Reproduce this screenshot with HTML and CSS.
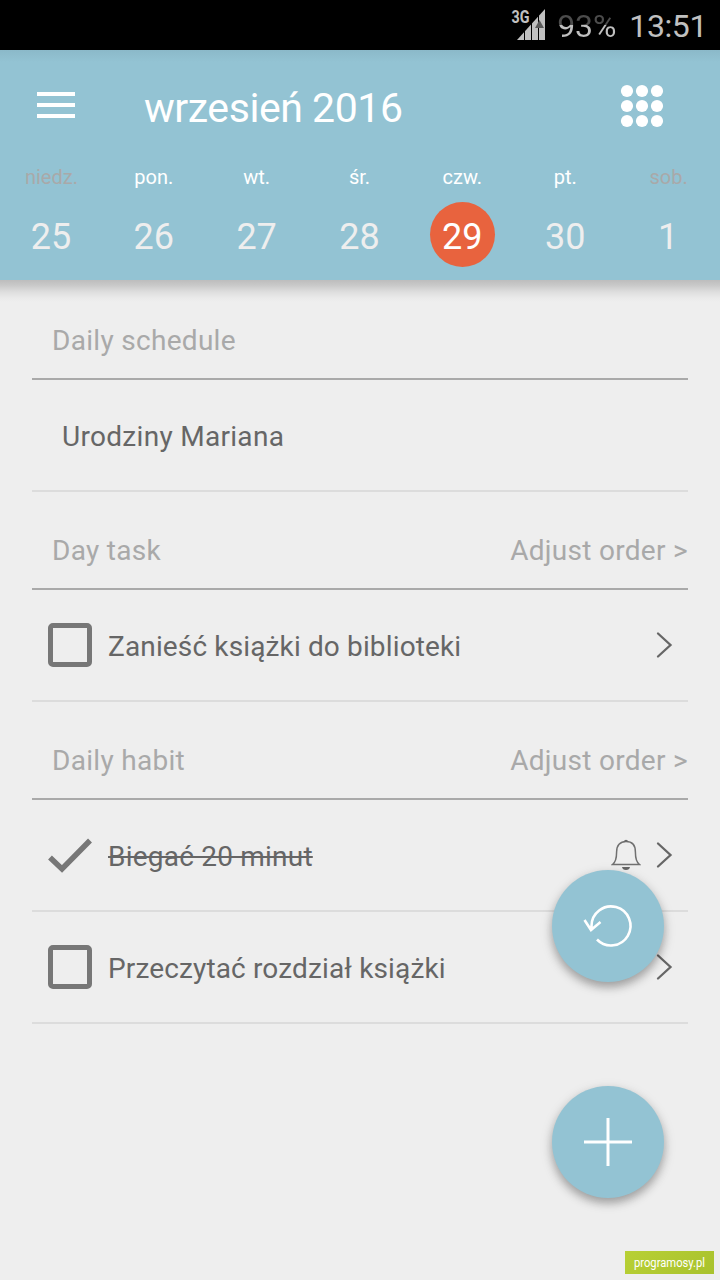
FILE: index.html
```html
<!DOCTYPE html>
<html lang="pl">
<head>
<meta charset="utf-8">
<title>wrzesień 2016</title>
<link rel="stylesheet" href="styles.css">
</head>
<body>
<div class="screen">
  <div class="statusbar">
    <svg class="signal" width="36" height="36" viewBox="0 0 36 36">
      <path d="M6 34L34 3V34Z" fill="#c0c0c0"/>
      <path d="M13.500 20V34M20.500 12V34M27.500 6V34" stroke="#000" stroke-width="1"/>
      <path d="M24 22L28.500 14L33 22Z" fill="#5a5a5a"/>
      <text class="network" x="0.500" y="17" textLength="18" lengthAdjust="spacingAndGlyphs">3G</text>
    </svg>
    <span class="battery">93%</span>
    <span class="clock">13:51</span>
  </div>

  <header class="header">
    <div class="toolbar">
      <svg class="menu" width="38" height="26" viewBox="0 0 38 26" fill="#fff">
        <path d="M0 0H38V4H0ZM0 11H38V15H0ZM0 22H38V26H0Z"/>
      </svg>
      <h1 class="title">wrzesień 2016</h1>
      <svg class="grid" width="44" height="44" viewBox="0 0 44 44" fill="#fff">
        <circle cx="7" cy="7" r="6.100"/><circle cx="22" cy="7" r="6.100"/><circle cx="37" cy="7" r="6.100"/>
        <circle cx="7" cy="22" r="6.100"/><circle cx="22" cy="22" r="6.100"/><circle cx="37" cy="22" r="6.100"/>
        <circle cx="7" cy="37" r="6.100"/><circle cx="22" cy="37" r="6.100"/><circle cx="37" cy="37" r="6.100"/>
      </svg>
    </div>
    <div class="week">
      <div class="day weekend"><span class="name">niedz.</span><span class="date">25</span></div>
      <div class="day"><span class="name">pon.</span><span class="date">26</span></div>
      <div class="day"><span class="name">wt.</span><span class="date">27</span></div>
      <div class="day"><span class="name">śr.</span><span class="date">28</span></div>
      <div class="day"><span class="name">czw.</span><span class="date today">29</span></div>
      <div class="day"><span class="name">pt.</span><span class="date">30</span></div>
      <div class="day weekend"><span class="name">sob.</span><span class="date">1</span></div>
    </div>
  </header>

  <main class="content">
    <div class="section"><span>Daily schedule</span></div>
    <div class="row event"><span class="label">Urodziny Mariana</span></div>

    <div class="section"><span>Day task</span><span class="adjust">Adjust order &gt;</span></div>
    <div class="row">
      <span class="box"></span><span class="label long">Zanieść książki do biblioteki</span>
      <svg class="chevron" width="18" height="28" viewBox="0 0 18 28"><path d="M2 2.500L14.500 14L2 25.500"/></svg>
    </div>

    <div class="section"><span>Daily habit</span><span class="adjust">Adjust order &gt;</span></div>
    <div class="row">
      <svg class="check" width="44" height="44" viewBox="0 0 44 44"><path d="M2 24.500L14 36L42 7.500"/></svg>
      <span class="label done">Biegać 20 minut</span>
      <svg class="bell" width="30" height="32" viewBox="0 0 30 32">
        <path d="M1.500 25.500C5 23 5.600 19 5.600 13C5.600 6.500 9 2.600 15 2.600S24.400 6.500 24.400 13C24.400 19 25 23 28.500 25.500Z" fill="none" stroke="#707070" stroke-width="1.500"/>
        <path d="M12.500 2.500Q15 -1 17.500 2.500ZM11 28H19Q18.500 31 15 31T11 28Z" fill="#666"/>
      </svg>
      <svg class="chevron" width="18" height="28" viewBox="0 0 18 28"><path d="M2 2.500L14.500 14L2 25.500"/></svg>
    </div>
    <div class="row">
      <span class="box"></span><span class="label long">Przeczytać rozdział książki</span>
      <svg class="chevron" width="18" height="28" viewBox="0 0 18 28"><path d="M2 2.500L14.500 14L2 25.500"/></svg>
    </div>
  </main>

  <div class="fab undo">
    <svg width="112" height="112" viewBox="0 0 112 112" fill="none" stroke="#fff" stroke-width="2.600">
      <path d="M39.500 60V56A19.500 19.500 0 1 1 45 69.500M32.500 50L39 60L48.500 52"/>
    </svg>
  </div>
  <div class="fab add">
    <svg width="112" height="112" viewBox="0 0 112 112" fill="none" stroke="#fff" stroke-width="3">
      <path d="M32 56H80M56 32V80"/>
    </svg>
  </div>
  <div class="watermark"><svg width="89" height="23" viewBox="0 0 89 23"><text x="9" y="15.500" textLength="71" lengthAdjust="spacingAndGlyphs">programosy.pl</text></svg></div>
</div>
</body>
</html>
```

FILE: styles.css
```css
* { box-sizing: border-box; }
body { margin: 0; background: #eee; font-family: Roboto, "Noto Sans", sans-serif; }
svg { display: block; flex: none; }
.screen { position: relative; width: 720px; height: 1280px; overflow: hidden; background: #eee; }

.statusbar { height: 50px; background: #000; display: flex; justify-content: flex-end; align-items: center; padding-right: 13px; color: #c0c0c0; font-size: 32px; line-height: 50px; white-space: nowrap; }
.signal { margin: -3px 10px 0 0; }
.network { font-size: 18px; font-weight: 700; fill: #c0c0c0; stroke: #000; stroke-width: 2px; paint-order: stroke; }
.battery { margin-right: 13px; padding-top: 2px; color: transparent; background: linear-gradient(#4c4c4c 26px, #c0c0c0 26px); background-clip: text; -webkit-background-clip: text; letter-spacing: -0.1px; }
.clock { padding-top: 2px; letter-spacing: -0.4px; }

.header { height: 230px; color: #fff; background: linear-gradient(#8bb9c9, #93c3d3 12px); display: flex; flex-direction: column; }
.toolbar { height: 112px; display: flex; align-items: center; padding: 0 56px 0 37px; }
.menu { margin-top: -2px; }
.title { margin: 4px auto 0 69px; font-size: 41px; font-weight: 400; line-height: 48px; letter-spacing: -0.45px; white-space: nowrap; }
.week { display: grid; grid-template-columns: repeat(7, 1fr); }
.day { display: flex; flex-direction: column; align-items: center; }
.name { font-size: 20px; line-height: 30px; margin-left: -1px; }
.weekend .name { color: #a9a9a9; margin-left: 0; }
.date { width: 65px; height: 65px; margin-top: 10px; padding-right: 1px; border-radius: 50%; line-height: 70px; font-size: 36px; color: #eee; text-align: center; }
.today { background: #e8633e; color: #fff; }

.content { padding: 2px 32px 0; font-size: 28px; letter-spacing: 0.3px; background: linear-gradient(#bdbdbd, #c8c8c8 5px, #dedede 12px, #eaeaea 18px, #eee 22px); }
.section { height: 98px; padding: 20px 0 0 20px; border-bottom: 2px solid #a9a9a9; color: #a9a9a9; display: flex; align-items: center; justify-content: space-between; }
.row { height: 112px; padding: 0 14px 0 16px; border-bottom: 2px solid #dcdcdc; color: #666; display: flex; align-items: center; }
.label { margin: 2px auto 0 16px; white-space: nowrap; }
.long { letter-spacing: 0.14px; }
.event .label { margin-left: 14px; }
.done { text-decoration: line-through; text-decoration-thickness: 2px; letter-spacing: 0.22px; }
.box { width: 44px; height: 44px; border: 5px solid #777; border-radius: 5px; }
.check path { fill: none; stroke: #777; stroke-width: 5.500px; }
.bell { margin-right: 15px; }
.chevron path { fill: none; stroke: #666; stroke-width: 2.300px; stroke-linecap: round; }

.fab { position: absolute; left: 552px; width: 112px; height: 112px; border-radius: 50%; background: #93c3d3; box-shadow: 0 5px 9px rgba(0, 0, 0, .26), 0 4px 14px rgba(0, 0, 0, .12); }
.undo { top: 870px; }
.add { top: 1086px; }
.watermark { position: absolute; left: 625px; top: 1251px; width: 89px; height: 23px; background: linear-gradient(135deg, #b8d035, #a9c22d); }
.watermark svg { overflow: visible; }
.watermark text { font-size: 13px; fill: #fff; font-weight: 400; }
```
